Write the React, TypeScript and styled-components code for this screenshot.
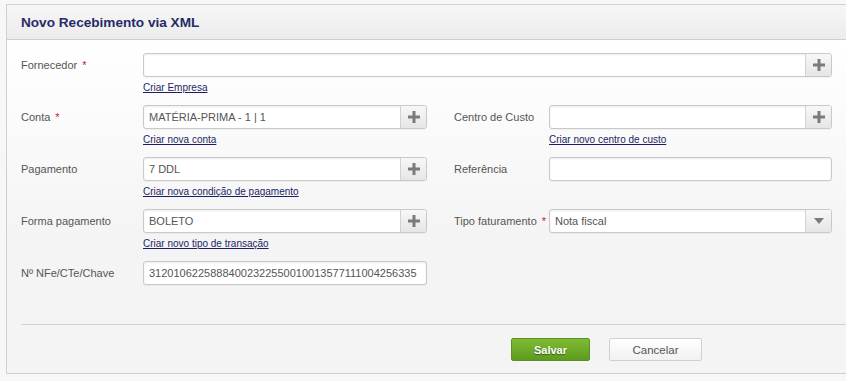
import React from "react";
import styled, { createGlobalStyle } from "styled-components";

const Global = createGlobalStyle`
  html, body { margin: 0; padding: 0; background: #f7f7f7; overflow: hidden; }
  body { font-family: "Liberation Sans", Arial, sans-serif; }
  * { box-sizing: border-box; }
`;

const Page = styled.div`
  width: 846px;
  height: 381px;
  padding: 4px 0 0 6px;
  overflow: hidden;
`;

const Panel = styled.div`
  width: 900px;
  border: 1px solid #cfcfcf;
  border-right: none;
`;

const Header = styled.div`
  height: 35px;
  display: flex;
  align-items: center;
  padding-left: 14px;
  background: linear-gradient(#f6f6f6, #ececec);
  border-bottom: 1px solid #cfcfcf;
`;

const Title = styled.h1`
  margin: 0;
  font-size: 13.6px;
  font-weight: bold;
  color: #262a68;
`;

const Body = styled.div`
  background: linear-gradient(#ffffff, #f4f4f4 60%);
  padding: 13px 0 0 14px;
`;

const Row = styled.div`
  display: flex;
  gap: 27px;
  height: 52px;
`;

const Field = styled.div<{ $labelWidth: number; $controlWidth: number }>`
  display: grid;
  grid-template-columns: ${(p) => p.$labelWidth}px ${(p) => p.$controlWidth}px;
  align-items: start;
`;

const Label = styled.label`
  font-size: 11px;
  line-height: 24px;
  color: #555;
  white-space: nowrap;
`;

const Req = styled.span`
  color: #d0103a;
  margin-left: 5px;
`;

const Control = styled.div`
  display: flex;
  flex-direction: column;
`;

const Group = styled.div`
  display: flex;
  height: 24px;
  border: 1px solid #c9c9c9;
  border-radius: 3px;
  background: #fff;
  box-shadow: inset 0 1px 2px rgba(0, 0, 0, 0.08), 0 1px 0 rgba(0, 0, 0, 0.04);
  overflow: hidden;
`;

const Input = styled.input`
  flex: 1;
  min-width: 0;
  border: none;
  outline: none;
  background: transparent;
  padding: 0 5px;
  font-family: "Liberation Sans", Arial, sans-serif;
  font-size: 11px;
  color: #555;
`;

const SideButton = styled.div`
  width: 26px;
  flex: none;
  display: flex;
  align-items: center;
  justify-content: center;
  border-left: 1px solid #d2d2d2;
  background: linear-gradient(#f7f7f7, #e6e6e6);
`;

const Link = styled.a`
  margin-top: 4px;
  font-size: 10px;
  line-height: 13px;
  color: #1c1f66;
  text-decoration: underline;
  cursor: pointer;
  white-space: nowrap;
`;

const Footer = styled.div`
  margin-top: 11px;
  border-top: 1px solid #d0d0d0;
  padding: 13px 0 12px 490px;
  display: flex;
  gap: 19px;
`;

const Button = styled.button<{ $primary?: boolean }>`
  height: 23px;
  width: ${(p) => (p.$primary ? 79 : 93)}px;
  border-radius: 2px;
  font-family: "Liberation Sans", Arial, sans-serif;
  font-size: ${(p) => (p.$primary ? 11 : 11.5)}px;
  font-weight: ${(p) => (p.$primary ? "bold" : "normal")};
  color: ${(p) => (p.$primary ? "#fff" : "#555")};
  text-shadow: ${(p) => (p.$primary ? "0 1px 1px rgba(0,0,0,0.45)" : "none")};
  border: 1px solid ${(p) => (p.$primary ? "#5c9022" : "#d0d0d0")};
  background: ${(p) =>
    p.$primary ? "linear-gradient(#7fbb32, #5d9b20)" : "linear-gradient(#ffffff, #f1f1f1)"};
  cursor: pointer;
`;

const PlusIcon = () => (
  <svg width="12" height="12" viewBox="0 0 12 12">
    <rect x="4.5" y="0" width="3" height="12" fill="#7b7b7b" />
    <rect x="0" y="4.5" width="12" height="3" fill="#7b7b7b" />
  </svg>
);

const CaretIcon = () => (
  <svg width="10" height="6" viewBox="0 0 10 6">
    <path d="M0 0 L10 0 L5 6 Z" fill="#7b7b7b" />
  </svg>
);

type FieldProps = {
  label: string;
  required?: boolean;
  value?: string;
  link?: string;
  addon?: "plus" | "caret";
  labelWidth: number;
  controlWidth: number;
};

const FormField: React.FC<FieldProps> = ({ label, required, value = "", link, addon, labelWidth, controlWidth }) => (
  <Field $labelWidth={labelWidth} $controlWidth={controlWidth}>
    <Label>
      {label}
      {required && <Req>*</Req>}
    </Label>
    <Control>
      <Group>
        <Input defaultValue={value} readOnly={addon === "caret"} />
        {addon && <SideButton>{addon === "plus" ? <PlusIcon /> : <CaretIcon />}</SideButton>}
      </Group>
      {link && <Link>{link}</Link>}
    </Control>
  </Field>
);

const L = { labelWidth: 122, controlWidth: 284 };
const R = { labelWidth: 95, controlWidth: 283 };

export default function App() {
  return (
    <>
      <Global />
      <Page>
        <Panel>
          <Header>
            <Title>Novo Recebimento via XML</Title>
          </Header>
          <Body>
            <Row>
              <FormField label="Fornecedor" required addon="plus" link="Criar Empresa" labelWidth={122} controlWidth={689} />
            </Row>
            <Row>
              <FormField {...L} label="Conta" required value="MATÉRIA-PRIMA - 1 | 1" addon="plus" link="Criar nova conta" />
              <FormField {...R} label="Centro de Custo" addon="plus" link="Criar novo centro de custo" />
            </Row>
            <Row>
              <FormField {...L} label="Pagamento" value="7 DDL" addon="plus" link="Criar nova condição de pagamento" />
              <FormField {...R} label="Referência" />
            </Row>
            <Row>
              <FormField {...L} label="Forma pagamento" value="BOLETO" addon="plus" link="Criar novo tipo de transação" />
              <FormField {...R} label="Tipo faturamento" required value="Nota fiscal" addon="caret" />
            </Row>
            <Row>
              <FormField {...L} label="Nº NFe/CTe/Chave" value="31201062258884002322550010013577111004256335" />
            </Row>
            <Footer>
              <Button $primary>Salvar</Button>
              <Button>Cancelar</Button>
            </Footer>
          </Body>
        </Panel>
      </Page>
    </>
  );
}
